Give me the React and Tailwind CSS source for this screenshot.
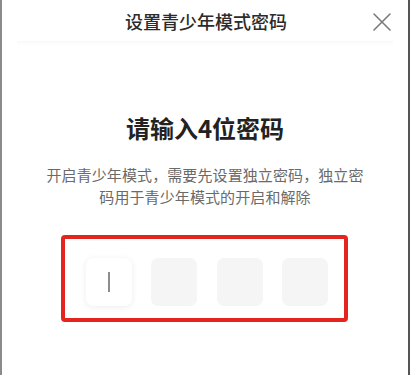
import React from 'react';

const CJK = { fontFamily: '"Noto Sans CJK SC", "Noto Sans", sans-serif' };

const CloseIcon = () => (
  <svg width="20" height="20" viewBox="0 0 20 20" fill="none">
    <path d="M2 2L18 18M18 2L2 18" stroke="#7a7a7a" strokeWidth="1.6" strokeLinecap="round" />
  </svg>
);

const App = () => {
  const cells = [0, 1, 2, 3];
  return (
    <div
      className="w-[412px] h-[375px] bg-white overflow-hidden flex border-l-2 border-[#8a8a8a]"
      style={CJK}
    >
      <div className="flex-1 flex flex-col relative">
        {/* 顶部标题栏 */}
        <header className="h-[41px] flex items-center justify-center">
          <h1 className="text-[18px] font-medium text-[#2b2b2b] leading-none ml-[2px]">
            设置青少年模式密码
          </h1>
          <button className="absolute right-[16px] top-[12px]">
            <CloseIcon />
          </button>
        </header>
        <div className="mx-[15px] h-[4px] bg-gradient-to-b from-[#f8f8f8] to-white" />

        <main className="flex flex-col items-center pt-[67px]">
          <h2 className="text-[24px] font-bold text-[#222] leading-[32px]">请输入4位密码</h2>
          <p className="mt-[20px] w-[324px] text-center text-[15px] leading-[22px] tracking-[0.1px] text-[#6a6a6a]">
            开启青少年模式，需要先设置独立密码，独立密码用于青少年模式的开启和解除
          </p>

          {/* 密码输入框 */}
          <div className="mt-[27px] mr-[2px] w-[287px] h-[87px] border-[4px] border-[#e3241f] rounded-[4px] pl-[21px] pt-[19px] flex gap-[19.5px]">
            {cells.map((i) => (
              <div
                key={i}
                className={`w-[46px] h-[48px] rounded-[7px] flex items-center justify-center ${
                  i === 0 ? 'bg-white shadow-[0_1px_6px_rgba(0,0,0,0.08)]' : 'bg-[#f5f5f5]'
                }`}
              >
                {i === 0 && <div className="w-[2px] h-[20px] bg-[#8c8c8c]" />}
              </div>
            ))}
          </div>
        </main>
      </div>
      <div className="w-[2px] bg-[#555]" />
      <div className="w-[2px] bg-white" />
    </div>
  );
};

export default App;
